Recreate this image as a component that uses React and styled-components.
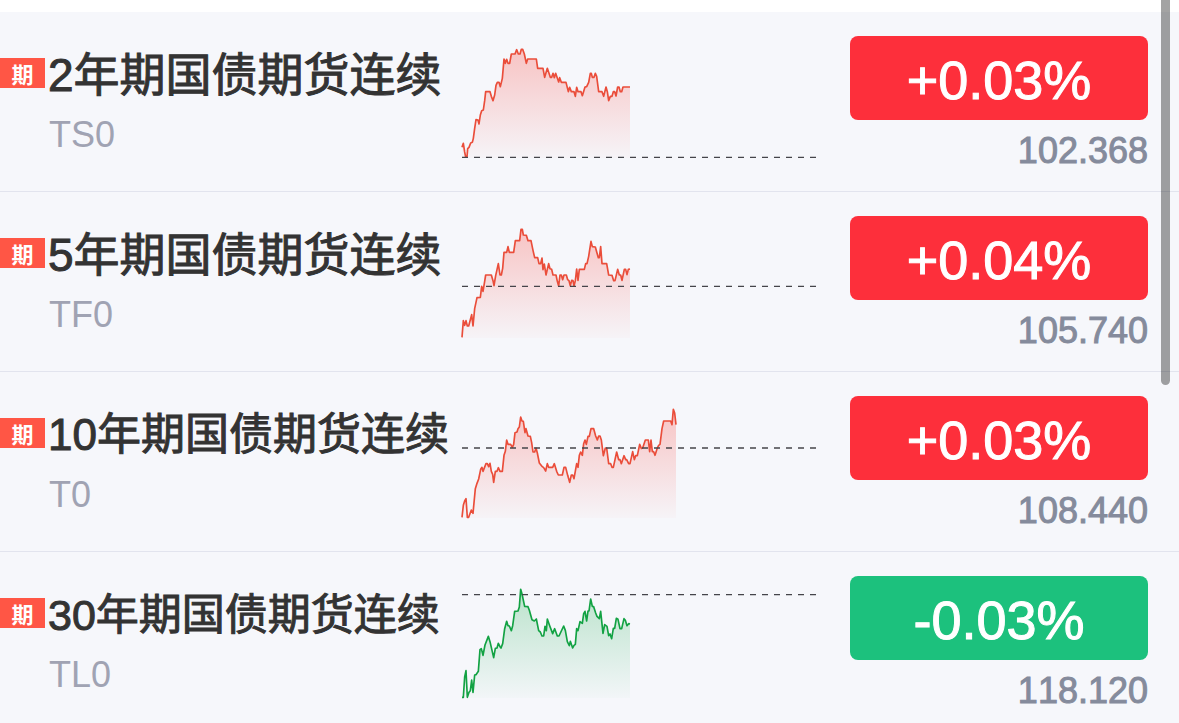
import React from 'react';
import styled, { createGlobalStyle } from 'styled-components';

const GlobalStyle = createGlobalStyle`
    * {
        box-sizing: border-box;
    }

    body {
        margin: 0;
        background-color: #ffffff;
        font-family: "Liberation Sans", "Noto Sans CJK SC", sans-serif;
    }
`;

const Page = styled.main`
    height: 100vh;
    padding-top: 12px;
    overflow: hidden;
`;

const QuoteList = styled.ul`
    margin: 0;
    padding: 0;
    list-style: none;
    background-color: #f6f7fb;
`;

const QuoteRow = styled.li`
    display: grid;
    grid-template-columns: 462fr 388fr 298fr;
    align-items: start;

    height: 180px;
    padding: 24px 31px 0 0;
    border-bottom: 1px solid #e2e4ee;
`;

const Info = styled.div`
    display: flex;
    align-items: flex-start;
    gap: 3px;
    min-width: 0;
`;

const Tag = styled.span`
    flex: none;
    width: 45px;
    margin-top: 22px;

    font-family: "Noto Sans CJK SC", sans-serif;
    font-size: 22px;
    font-weight: 700;
    line-height: 30px;
    text-align: center;
    color: #ffffff;

    background-color: #ff5645;
`;

const Titles = styled.div`
    min-width: 0;
    white-space: nowrap;
`;

const Name = styled.div`
    font-size: ${props => props.$size}px;
    font-weight: 400;
    line-height: 78px;
    color: #333333;
    -webkit-text-stroke: 1px #333333;
`;

const Code = styled.div`
    padding-left: 1px;
    font-size: 36px;
    line-height: 42px;
    color: #a0a3b3;
`;

const Chart = styled.svg`
    display: block;
    width: calc(100% - 34px);
    height: 110px;
    margin-top: 12px;
    overflow: visible;
`;

const Quote = styled.div`
    display: flex;
    flex-direction: column;
    font-kerning: none;
`;

const Change = styled.div`
    height: 84px;
    border-radius: 8px;

    font-size: 54px;
    line-height: 88px;
    text-align: center;
    color: #ffffff;
    -webkit-text-stroke: 1px #ffffff;

    background-color: ${props => (props.$down ? '#1cc17d' : '#fd2f3b')};
`;

const Price = styled.div`
    margin-top: 8px;
    font-size: 36px;
    line-height: 46px;
    text-align: right;
    color: #858b9c;
    -webkit-text-stroke: 1px #858b9c;
`;

const ScrollThumb = styled.div`
    position: fixed;
    top: 0;
    right: 9px;
    width: 9px;
    height: 53.3vh;
    border-radius: 0 0 5px 5px;
    background-color: rgba(0, 0, 0, 0.36);
`;

// points use three units per pixel, base is the height of the previous close
const quotes = [
    {
        code: 'TS0',
        name: '2年期国债期货连续',
        size: 46,
        change: '+0.03%',
        price: '102.368',
        base: 328,
        points: '0,298 4,286 8,312 11,327 15,327 17,302 21,298 26,285 31,283 34,271 38,241 42,215 48,216 51,228 55,201 59,188 64,186 68,158 71,131 84,131 88,145 93,158 98,141 102,112 106,103 111,103 115,116 121,91 126,33 130,46 134,34 138,46 143,46 148,18 159,18 164,5 169,18 174,18 178,4 182,4 187,18 193,46 197,33 223,33 227,61 243,61 248,88 256,61 265,88 269,88 273,76 277,89 281,76 290,102 293,89 298,103 312,103 319,131 323,118 328,131 336,131 340,145 344,118 348,131 357,131 361,143 369,117 374,116 380,103 385,76 388,76 391,88 396,88 400,76 404,85 410,131 420,131 425,145 432,117 436,131 440,158 445,145 450,145 454,131 458,131 462,144 467,117 471,117 475,131 479,131 483,117 504,117',
    },
    {
        code: 'TF0',
        name: '5年期国债期货连续',
        size: 46,
        change: '+0.04%',
        price: '105.740',
        base: 175,
        points: '0,328 4,278 8,292 12,278 16,294 20,294 29,260 33,294 38,242 45,209 55,208 59,175 63,190 68,160 71,141 88,141 93,158 96,173 101,143 109,107 114,141 118,141 122,121 126,73 134,73 138,56 142,73 155,73 160,38 173,38 177,4 181,4 184,21 193,22 198,38 207,38 213,67 218,89 227,89 231,107 236,107 240,90 243,125 247,108 252,141 260,107 264,122 269,124 273,141 282,141 286,160 290,174 294,141 298,141 302,155 306,141 313,141 317,155 321,158 325,173 329,157 333,158 336,174 340,158 344,123 348,157 352,124 367,124 371,107 375,107 380,85 387,40 391,56 400,57 405,75 409,89 412,89 416,56 420,107 434,107 440,141 450,142 455,158 459,158 467,124 472,141 476,141 480,157 487,124 491,124 495,140 499,124 504,123',
    },
    {
        code: 'T0',
        name: '10年期国债期货连续',
        size: 44,
        change: '+0.03%',
        price: '108.440',
        base: 120,
        points: '0,328 4,292 8,279 12,272 16,328 20,328 28,306 33,316 40,242 45,226 50,213 56,184 60,178 63,190 72,167 76,167 80,176 84,166 88,190 92,199 95,223 100,190 105,190 109,179 114,190 121,190 126,142 130,130 134,96 138,109 146,109 151,118 155,109 159,74 165,72 168,62 172,57 176,27 180,39 184,40 189,74 192,62 198,84 205,85 209,104 213,132 218,132 222,120 226,135 232,165 241,176 245,179 251,189 256,167 260,178 272,178 277,167 284,190 289,201 301,201 306,178 311,178 317,202 323,223 328,201 332,201 336,212 344,167 348,178 352,142 356,132 361,142 365,107 369,96 373,109 378,85 382,85 387,62 395,62 401,84 406,96 410,84 414,84 418,96 424,143 430,120 434,120 440,167 446,167 450,178 454,178 459,155 464,132 470,155 474,155 478,167 486,143 491,155 494,155 500,167 504,167 512,131 517,155 521,143 526,143 533,109 538,121 542,120 550,96 559,96 563,131 567,96 571,131 575,131 579,142 586,120 590,112 594,109 600,62 605,39 626,39 630,50 634,4 638,15 642,50',
    },
    {
        code: 'TL0',
        name: '30年期国债期货连续',
        size: 43,
        change: '-0.03%',
        price: '118.120',
        base: 20,
        down: true,
        points: '0,328 4,328 8,267 12,248 16,328 21,313 25,308 29,276 33,313 38,261 42,260 49,250 54,185 58,182 63,202 69,171 79,145 84,161 95,209 100,181 105,180 109,166 114,176 117,180 122,167 128,122 134,100 138,113 142,114 148,128 152,113 158,70 168,69 172,57 176,4 180,18 188,55 198,56 202,67 210,95 217,99 223,93 230,128 235,132 240,144 245,144 249,115 253,128 256,93 263,113 272,137 278,122 286,144 291,144 305,114 310,127 316,161 322,173 325,160 332,180 336,172 340,169 344,122 348,128 354,101 361,106 365,77 369,70 374,99 378,69 381,69 386,33 391,55 395,56 401,75 405,85 412,92 416,70 423,136 428,110 435,115 440,143 444,138 449,152 454,121 458,121 463,91 468,94 474,122 479,122 486,92 490,97 495,113 500,107 504,108',
    },
];

const Sparkline = ({ id, name, points, base, down }) => {
    const line = down ? '#12a243' : '#ea4d3a';
    const fill = down ? '#2fb35c' : '#fb4c43';
    const lastX = points.split(' ').pop().split(',')[0];

    return (
        <Chart viewBox="0 0 1062 330" preserveAspectRatio="none" role="img" aria-label={name}>
            <defs>
                <linearGradient id={id} x1="0" y1="0" x2="0" y2="1">
                    <stop offset="0" stopColor={fill} stopOpacity="0.3" />
                    <stop offset="1" stopColor={fill} stopOpacity="0.02" />
                </linearGradient>
            </defs>
            <polygon points={`0,330 ${points} ${lastX},330`} fill={`url(#${id})`} />
            <polyline points={points} fill="none" stroke={line} strokeWidth="5" strokeLinejoin="round" />
            <line x1="0" y1={base} x2="1062" y2={base} stroke="#45454a" strokeWidth="4" strokeDasharray="18 18" />
        </Chart>
    );
};

export default function App() {
    return (
        <Page>
            <GlobalStyle />
            <QuoteList>
                {quotes.map(quote => (
                    <QuoteRow key={quote.code}>
                        <Info>
                            <Tag>期</Tag>
                            <Titles>
                                <Name $size={quote.size}>{quote.name}</Name>
                                <Code>{quote.code}</Code>
                            </Titles>
                        </Info>
                        <Sparkline
                            id={`fill-${quote.code}`}
                            name={quote.name}
                            points={quote.points}
                            base={quote.base}
                            down={quote.down}
                        />
                        <Quote>
                            <Change $down={quote.down}>{quote.change}</Change>
                            <Price>{quote.price}</Price>
                        </Quote>
                    </QuoteRow>
                ))}
            </QuoteList>
            <ScrollThumb />
        </Page>
    );
}
